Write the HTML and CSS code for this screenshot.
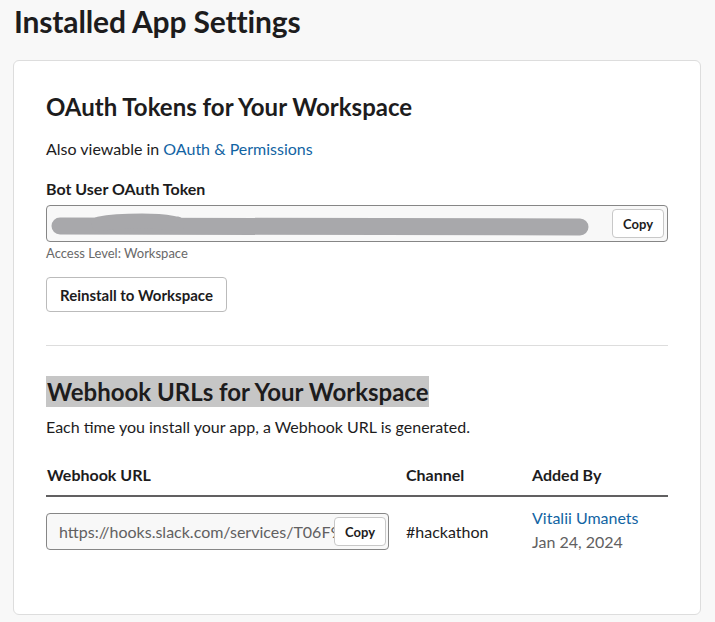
FILE: index.html
```html
<!DOCTYPE html>
<html>
<head>
<meta charset="utf-8">
<link rel="stylesheet" href="styles.css">
</head>
<body>
<h1 class="page-title">Installed App Settings</h1>
<div class="card">
  <section class="section">
    <h2 class="section-title">OAuth Tokens for Your Workspace</h2>
    <p class="desc first">Also viewable in <a class="link" href="#">OAuth &amp; Permissions</a></p>
    <div class="field-label">Bot User OAuth Token</div>
    <div class="token-input">
      <svg class="redact" width="560" height="36" viewBox="0 0 560 36">
        <path d="M13 20 L533 21" fill="none" stroke="#a8a8ab" stroke-width="17" stroke-linecap="round"/>
        <path d="M52 18 C62 16 72 15 95 15 C115 15 118 16 130 18" fill="none" stroke="#a8a8ab" stroke-width="15" stroke-linecap="round"/>
      </svg>
      <button class="copy-btn">Copy</button>
    </div>
    <div class="hint">Access Level: Workspace</div>
    <button class="btn">Reinstall to Workspace</button>
  </section>
  <hr class="divider">
  <section class="section">
    <h2 class="section-title"><span class="selected">Webhook URLs for Your Workspace</span></h2>
    <p class="desc">Each time you install your app, a Webhook URL is generated.</p>
    <div class="table">
      <div class="th">Webhook URL</div>
      <div class="th">Channel</div>
      <div class="th">Added By</div>
      <div class="td">
        <div class="url-input">
          <span class="url-text">https://hooks.slack.com/services/T06F9XXXXXX</span>
          <button class="copy-btn">Copy</button>
        </div>
      </div>
      <div class="td channel">#hackathon</div>
      <div class="td added">
        <a class="link" href="#">Vitalii Umanets</a>
        <span class="date">Jan 24, 2024</span>
      </div>
    </div>
  </section>
</div>
</body>
</html>
```
FILE: styles.css
```css
* { box-sizing: border-box; }
html, body { margin: 0; padding: 0; }
body {
  background: #f8f8f8;
  font-family: Lato, "Open Sans", sans-serif;
  color: #1d1c1d;
  padding: 0 14px 0 13px;
  height: 622px;
  overflow: hidden;
}
.page-title {
  margin: 0;
  padding: 1px 0 0 1px;
  height: 60px;
  font-size: 30px;
  font-weight: 700;
  line-height: 40px;
  letter-spacing: -0.15px;
}
.card {
  background: #fff;
  border: 1px solid #dddddd;
  border-radius: 6px;
  padding: 32px;
  height: 555px;
}
.section-title {
  margin: 0;
  font-size: 24px;
  font-weight: 700;
  line-height: 32px;
}
.card > .section:first-child .section-title { margin-top: -2px; }
.selected { background: #c6c6c6; padding: 1px 0 1px 1px; }
.desc {
  margin: 7px 0 0;
  font-size: 16px;
  line-height: 24px;
}
.desc.first { margin-top: 14px; }
.link { color: #1264a3; text-decoration: none; }
.field-label {
  margin-top: 16px;
  font-size: 16px;
  font-weight: 700;
  line-height: 24px;
}
.token-input {
  position: relative;
  margin-top: 4px;
  height: 37px;
  border: 1px solid #868686;
  border-radius: 4px;
  background: #f8f8f8;
  display: flex;
  align-items: center;
  justify-content: flex-end;
  padding-right: 3px;
}
.redact { position: absolute; left: 0; top: 0; }
.copy-btn {
  font-family: Lato, sans-serif;
  background: #fff;
  border: 1px solid #c8c8c8;
  border-radius: 4px;
  height: 29px;
  padding: 0 10px;
  font-size: 13px;
  font-weight: 700;
  color: #1d1c1d;
  cursor: pointer;
}
.hint {
  margin-top: 2px;
  font-size: 13px;
  color: #696969;
  line-height: 18px;
}
.btn {
  margin-top: 15px;
  height: 35px;
  padding: 0 13px;
  background: #fff;
  border: 1px solid #bbbbbb;
  border-radius: 4px;
  font-family: Lato, sans-serif;
  font-size: 15px;
  font-weight: 700;
  color: #1d1c1d;
}
.divider {
  border: 0;
  border-top: 1px solid #dddddd;
  margin: 33px 0 30px;
}
.table {
  margin-top: 24px;
  display: grid;
  grid-template-columns: 359px 126px 1fr;
}
.th {
  font-size: 16px;
  font-weight: 700;
  line-height: 24px;
  padding: 0 0 8px 1px;
  border-bottom: 2px solid #616061;
}
.td { padding-top: 16px; font-size: 16px; line-height: 24px; }
.url-input {
  width: 343px;
  height: 37px;
  border: 1px solid #868686;
  border-radius: 4px;
  background: #f8f8f8;
  display: flex;
  align-items: center;
  padding: 0 2px 0 12px;
  overflow: hidden;
}
.url-text {
  flex: 1;
  min-width: 0;
  white-space: nowrap;
  overflow: hidden;
  color: #616061;
  font-size: 16px;
}
.url-input .copy-btn { flex: none; padding: 0 10px; }
.channel { padding-top: 23px; padding-left: 1px; }
.added { padding-top: 9px; padding-left: 1px; display: flex; flex-direction: column; line-height: 24px; }
.date { color: #616061; }
```
